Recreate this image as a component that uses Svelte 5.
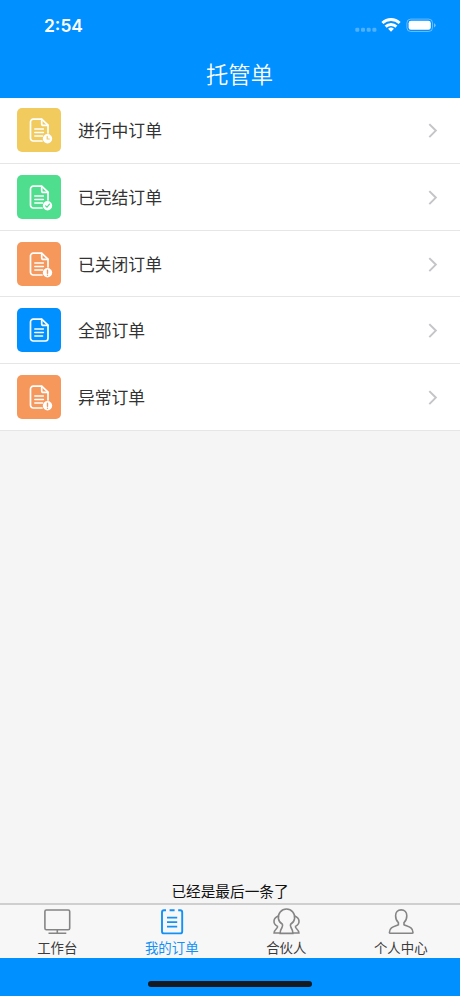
<script lang="ts">
	type Badge = 'clock' | 'check' | 'alert' | 'none';

	const orders: { label: string; color: string; badge: Badge }[] = [
		{ label: '进行中订单', color: '#f2cb5f', badge: 'clock' },
		{ label: '已完结订单', color: '#4fdd8e', badge: 'check' },
		{ label: '已关闭订单', color: '#f6985b', badge: 'alert' },
		{ label: '全部订单', color: '#0090ff', badge: 'none' },
		{ label: '异常订单', color: '#f6985b', badge: 'alert' }
	];

	const tabs = [
		{ id: 'work', label: '工作台' },
		{ id: 'orders', label: '我的订单' },
		{ id: 'partner', label: '合伙人' },
		{ id: 'me', label: '个人中心' }
	];

	let active = $state('orders');
</script>

<div class="screen">
	<header class="header">
		<div class="status">
			<span class="time">2:54</span>
			<svg class="status-icons" width="84" height="20" viewBox="0 0 84 20">
				<g fill="#fff" opacity="0.3">
					<rect x="3.3" y="12.8" width="4" height="4" rx="1.3" />
					<rect x="9" y="12.8" width="4" height="4" rx="1.3" />
					<rect x="14.7" y="12.8" width="4" height="4" rx="1.3" />
					<rect x="20.4" y="12.8" width="4" height="4" rx="1.3" />
				</g>
				<g fill="none" stroke="#fff" stroke-width="2.9">
					<path d="M30.4 8a12.3 12.3 0 0 1 17.2 0" />
					<path d="M33.6 11.6a7.8 7.8 0 0 1 10.8 0" />
				</g>
				<path d="M36.1 13.8a4.2 4.2 0 0 1 5.8 0L39 16.8z" fill="#fff" />
				<rect x="54.9" y="4.1" width="25.6" height="12.4" rx="3.8" fill="none" stroke="#fff" stroke-opacity="0.4" />
				<rect x="56.6" y="5.8" width="22.2" height="9" rx="2.4" fill="#fff" />
				<path d="M82 8.2v4.2q1.6-.7 1.6-2.1T82 8.2z" fill="#fff" opacity="0.45" />
			</svg>
		</div>
		<h1 class="title">托管单</h1>
	</header>

	<main class="content">
		<ul class="list">
			{#each orders as order}
				<li class="row">
					<svg class="row-icon" viewBox="0 0 44 44" style="background: {order.color}">
						<g fill="none" stroke="#fff" stroke-width="1.7" stroke-linecap="round" stroke-linejoin="round">
							{#if order.badge === 'none'}
								<path d="M24.7 11.2h-8.5a2.7 2.7 0 0 0-2.7 2.7v16.4a2.7 2.7 0 0 0 2.7 2.7h12.1a2.7 2.7 0 0 0 2.7-2.7V17.2z" />
							{:else}
								<path d="M25 33h-8.8a2.7 2.7 0 0 1-2.7-2.7V13.9a2.7 2.7 0 0 1 2.7-2.7h8.5l6.3 6V25" />
							{/if}
							<path d="M24.7 11.4v4.3q0 1.7 1.7 1.7h4.5" />
							<path d="M17.8 20.9h8.6M17.8 24.5h8.6M17.8 28.1h7.8" stroke-width="1.5" />
						</g>
						{#if order.badge !== 'none'}
							<circle cx="30.5" cy="30.7" r="4.7" fill="#fff" />
							<g fill="none" stroke={order.color} stroke-width="1.2" stroke-linecap="round">
								{#if order.badge === 'clock'}
									<path d="M30.2 28.4V31h2.1" />
								{:else if order.badge === 'check'}
									<path d="M28.6 30.8l1.4 1.4 2.5-3" />
								{:else}
									<path d="M30.5 28.3v2.9M30.5 33.1v.1" stroke-width="1.4" />
								{/if}
							</g>
						{/if}
					</svg>
					<span class="row-label">{order.label}</span>
					<svg class="arrow" width="10" height="16" viewBox="0 0 10 16">
						<path d="M1.3 2.1l6.5 6.5-6.5 6.5" fill="none" stroke="#c5c5c9" stroke-width="2" />
					</svg>
				</li>
			{/each}
		</ul>
		<p class="end">已经是最后一条了</p>
	</main>

	<nav class="tabs">
		{#each tabs as tab}
			<button class="tab" class:active={active === tab.id} onclick={() => (active = tab.id)}>
				<svg width="30" height="30" viewBox="0 0 30 30" fill="none" stroke="currentColor" stroke-width="1.6">
					{#if tab.id === 'work'}
						<rect x="2.9" y="4" width="24.8" height="19.8" rx="1.5" />
						<path d="M15.3 23.8V27M6.5 27.2h17.8" />
					{:else if tab.id === 'orders'}
						<path d="M9 4.2H7a2 2 0 0 0-2 2v19.2a2 2 0 0 0 2 2h16.2a2 2 0 0 0 2-2V6.2a2 2 0 0 0-2-2h-2M12.6 4.2h5" stroke-width="1.9" />
						<path d="M10 11.7h10.2M10 16.2h10.2M10 20.7h10.2" stroke-width="1.8" />
					{:else if tab.id === 'partner'}
						<path d="M11.4 18.3a8.2 8.2 0 1 1 8.2 0q-.5 1.300.4 3.200 1.900 2.900 1.900 5.900H9.100q0-3 1.900-5.900.9-1.900.4-3.200z" />
						<path d="M7.400 10c-5.400 1.800-6 7.600-.9 10.400.8 2-3.200 2.600-3.400 6.600h6M23.600 10c5.400 1.800 6 7.600.9 10.400-.8 2 3.200 2.600 3.400 6.600h-6" />
					{:else}
						<path d="M15.200 3.900c-3.600 0-5.600 2.600-5.600 5.900 0 3 .8 5.200 2.800 6.800v2.200c-3.700 1.700-9 2.200-9 7.600 0 .6.4.9 1 .9H26c.6 0 1-.3 1-.9 0-5.400-5.300-5.900-9-7.600v-2.200c2-1.600 2.800-3.800 2.800-6.800 0-3.300-2-5.900-5.600-5.900z" />
					{/if}
				</svg>
				<span class="tab-label">{tab.label}</span>
			</button>
		{/each}
	</nav>

	<div class="home">
		<div class="home-bar"></div>
	</div>
</div>

<style>
	:global(body) {
		margin: 0;
	}

	.screen {
		width: 460px;
		height: 996px;
		display: flex;
		flex-direction: column;
		overflow: hidden;
		background: #f5f5f5;
		font-family: 'Noto Sans CJK SC', sans-serif;
		color: #333;
	}

	/* Header */
	.header {
		flex: none;
		height: 97.6px;
		background: #0090ff;
		color: #fff;
	}

	.status {
		height: 50px;
		box-sizing: border-box;
		padding: 15px 24px 0 44px;
		display: flex;
		align-items: flex-start;
		justify-content: space-between;
	}

	.time {
		font-family: Inter, sans-serif;
		font-size: 17.4px;
		line-height: 22px;
		font-weight: 600;
	}

	.title {
		margin: 0;
		font-size: 22.3px;
		line-height: 46px;
		font-weight: 350;
		text-align: center;
		padding-left: 19px;
	}

	/* Order list */
	.content {
		flex: 1;
		min-height: 0;
		display: flex;
		flex-direction: column;
		justify-content: space-between;
	}

	.list {
		list-style: none;
		margin: 0;
		padding: 0;
		background: #fff;
	}

	.row {
		height: 66.6px;
		box-sizing: border-box;
		padding: 0 22px 0 17px;
		display: flex;
		align-items: center;
		border-bottom: 1px solid #e6e6e6;
	}

	.row-icon {
		width: 44px;
		height: 44px;
		border-radius: 5px;
	}

	.row-label {
		flex: 1;
		margin-left: 17px;
		font-size: 16.8px;
		line-height: 24px;
	}

	.end {
		margin: 0 0 1px;
		font-size: 14.65px;
		line-height: 22px;
		text-align: center;
		color: #111;
	}

	/* Tab bar */
	.tabs {
		flex: none;
		height: 55px;
		box-sizing: border-box;
		border-top: 2px solid #cfcfcf;
		padding-right: 2px;
		background: #f7f7f8;
		display: flex;
	}

	.tab {
		flex: 1;
		padding: 1px 0 0;
		border: 0;
		background: none;
		font-family: inherit;
		color: #858585;
		display: flex;
		flex-direction: column;
		align-items: center;
	}

	.tab svg {
		flex: none;
	}

	.tab-label {
		font-size: 13.4px;
		line-height: 22px;
		color: #3c3c3c;
	}

	.tab.active,
	.tab.active .tab-label {
		color: #1491f5;
	}

	.home {
		flex: none;
		height: 38px;
		background: #0090ff;
		display: flex;
		justify-content: center;
		align-items: flex-end;
	}

	.home-bar {
		width: 164px;
		height: 5.5px;
		margin-bottom: 9.5px;
		border-radius: 3px;
		background: #151a20;
	}
</style>
